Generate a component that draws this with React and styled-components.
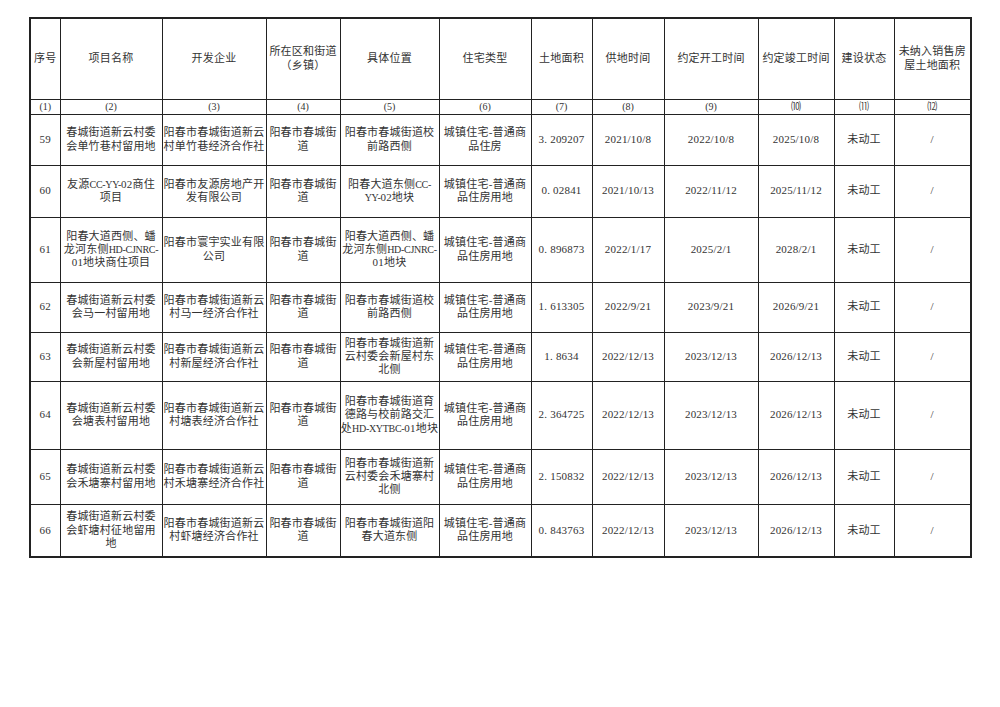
import React from "react";
import styled, { createGlobalStyle } from "styled-components";

const GlobalStyle = createGlobalStyle`
  html, body {
    margin: 0;
    padding: 0;
    background: #ffffff;
  }
  body {
    font-family: "Liberation Serif", "Noto Sans CJK SC", serif;
    color: #333;
  }
`;

const columns = [30, 102, 104, 74, 99, 92, 61, 72, 94, 76, 60, 77];

const headers = [
  "序号",
  "项目名称",
  "开发企业",
  "所在区和街道\n（乡镇）",
  "具体位置",
  "住宅类型",
  "土地面积",
  "供地时间",
  "约定开工时间",
  "约定竣工时间",
  "建设状态",
  "未纳入销售房\n屋土地面积",
];

const indexes = ["(1)", "(2)", "(3)", "(4)", "(5)", "(6)", "(7)", "(8)", "(9)", "⑽", "⑾", "⑿"];

const rows = [
  {
    height: 51,
    cells: ["59", "春城街道新云村委\n会单竹巷村留用地", "阳春市春城街道新云\n村单竹巷经济合作社", "阳春市春城街\n道", "阳春市春城街道校\n前路西侧", "城镇住宅-普通商\n品住房", "3. 209207", "2021/10/8", "2022/10/8", "2025/10/8", "未动工", "/"],
  },
  {
    height: 52,
    cells: ["60", "友源CC-YY-02商住\n项目", "阳春市友源房地产开\n发有限公司", "阳春市春城街\n道", "阳春大道东侧CC-\nYY-02地块", "城镇住宅-普通商\n品住房用地", "0. 02841", "2021/10/13", "2022/11/12", "2025/11/12", "未动工", "/"],
  },
  {
    height: 65,
    cells: ["61", "阳春大道西侧、蟠\n龙河东侧HD-CJNRC-\n01地块商住项目", "阳春市寰宇实业有限\n公司", "阳春市春城街\n道", "阳春大道西侧、蟠\n龙河东侧HD-CJNRC-\n01地块", "城镇住宅-普通商\n品住房用地", "0. 896873", "2022/1/17", "2025/2/1", "2028/2/1", "未动工", "/"],
  },
  {
    height: 50,
    cells: ["62", "春城街道新云村委\n会马一村留用地", "阳春市春城街道新云\n村马一经济合作社", "阳春市春城街\n道", "阳春市春城街道校\n前路西侧", "城镇住宅-普通商\n品住房用地", "1. 613305", "2022/9/21", "2023/9/21", "2026/9/21", "未动工", "/"],
  },
  {
    height: 49,
    cells: ["63", "春城街道新云村委\n会新屋村留用地", "阳春市春城街道新云\n村新屋经济合作社", "阳春市春城街\n道", "阳春市春城街道新\n云村委会新屋村东\n北侧", "城镇住宅-普通商\n品住房用地", "1. 8634", "2022/12/13", "2023/12/13", "2026/12/13", "未动工", "/"],
  },
  {
    height: 68,
    cells: ["64", "春城街道新云村委\n会塘表村留用地", "阳春市春城街道新云\n村塘表经济合作社", "阳春市春城街\n道", "阳春市春城街道育\n德路与校前路交汇\n处HD-XYTBC-01地块", "城镇住宅-普通商\n品住房用地", "2. 364725", "2022/12/13", "2023/12/13", "2026/12/13", "未动工", "/"],
  },
  {
    height: 55,
    cells: ["65", "春城街道新云村委\n会禾塘寨村留用地", "阳春市春城街道新云\n村禾塘寨经济合作社", "阳春市春城街\n道", "阳春市春城街道新\n云村委会禾塘寨村\n北侧", "城镇住宅-普通商\n品住房用地", "2. 150832", "2022/12/13", "2023/12/13", "2026/12/13", "未动工", "/"],
  },
  {
    height: 53,
    cells: ["66", "春城街道新云村委\n会虾塘村征地留用\n地", "阳春市春城街道新云\n村虾塘经济合作社", "阳春市春城街\n道", "阳春市春城街道阳\n春大道东侧", "城镇住宅-普通商\n品住房用地", "0. 843763", "2022/12/13", "2023/12/13", "2026/12/13", "未动工", "/"],
  },
];

const Page = styled.div`
  width: 1000px;
  min-height: 707px;
  padding: 17px 0 0 29px;
  box-sizing: border-box;
  background: #ffffff;
`;

const Sheet = styled.table`
  width: 941px;
  table-layout: fixed;
  border-collapse: collapse;
  border: 2px solid #222;
`;

const Cell = styled.td`
  height: ${(p) => p.$h}px;
  padding: 0;
  border: 1px solid #222;
  box-sizing: border-box;
  text-align: center;
  vertical-align: middle;
  white-space: pre;
  overflow: hidden;
  font-size: ${(p) => (p.$small ? 10 : 11)}px;
  line-height: ${(p) => (p.$small ? 12 : 13.3)}px;
  letter-spacing: ${(p) => (p.$small ? 0 : 0.2)}px;
  color: #333;
`;

const HeadCell = styled(Cell).attrs({ as: "th" })`
  font-weight: normal;
`;

// capital letter codes such as HD-CJNRC- are set narrower, as in the source sheet
const Latin = styled.span`
  font-size: 10px;
  letter-spacing: -0.3px;
`;

const renderText = (text) =>
  text.split(/([A-Z][A-Z-]*)/).map((part, i) =>
    /^[A-Z]/.test(part) ? <Latin key={i}>{part}</Latin> : part
  );

export default function App() {
  return (
    <>
      <GlobalStyle />
      <Page>
        <Sheet>
          <colgroup>
            {columns.map((w, i) => (
              <col key={i} style={{ width: w }} />
            ))}
          </colgroup>
          <thead>
            <tr>
              {headers.map((h, i) => (
                <HeadCell key={i} $h={81}>
                  {h}
                </HeadCell>
              ))}
            </tr>
            <tr>
              {indexes.map((n, i) => (
                <HeadCell key={i} $h={15} $small>
                  {n}
                </HeadCell>
              ))}
            </tr>
          </thead>
          <tbody>
            {rows.map((row) => (
              <tr key={row.cells[0]}>
                {row.cells.map((c, i) => (
                  <Cell key={i} $h={row.height}>
                    {renderText(c)}
                  </Cell>
                ))}
              </tr>
            ))}
          </tbody>
        </Sheet>
      </Page>
    </>
  );
}
